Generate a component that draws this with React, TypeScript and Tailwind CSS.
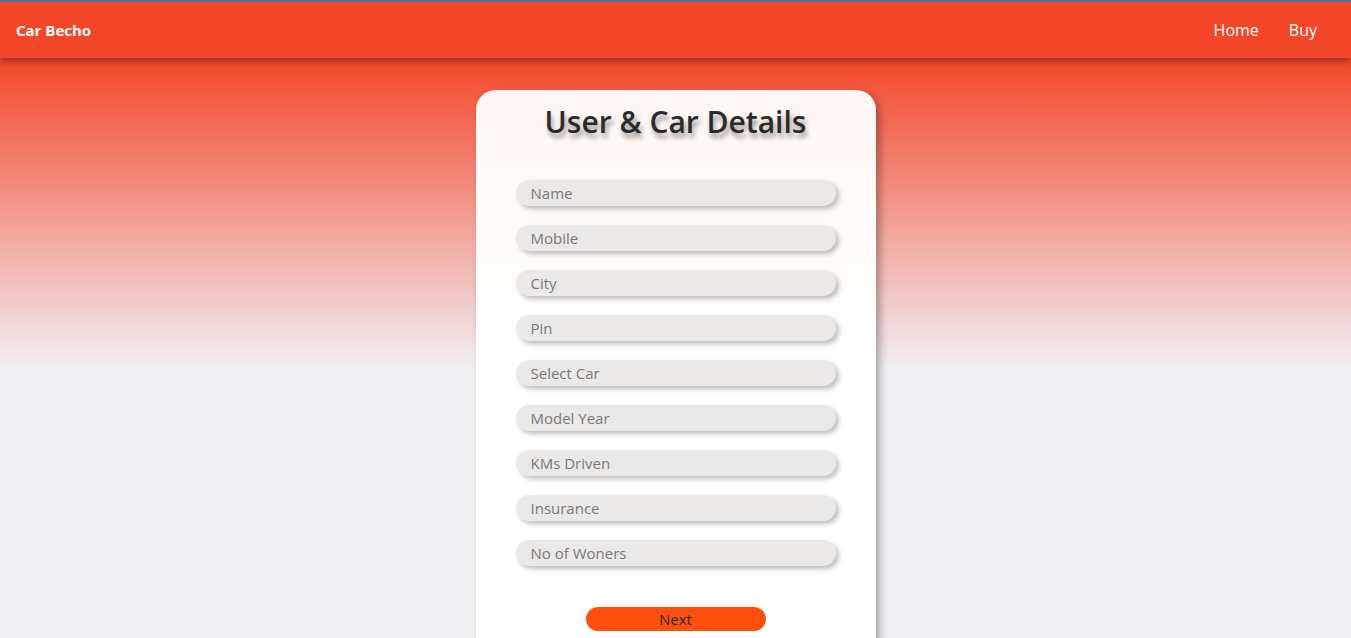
import React from "react";

const FIELDS = [
  "Name",
  "Mobile",
  "City",
  "Pin",
  "Select Car",
  "Model Year",
  "KMs Driven",
  "Insurance",
  "No of Woners",
];

function Navbar() {
  return (
    <nav className="relative z-10 flex h-[56px] shrink-0 items-center justify-between bg-[#f4472a] pl-4 pr-[34px] shadow-[0_4px_6px_rgba(0,0,0,0.3)]">
      <span className="text-[15px] font-bold text-white">Car Becho</span>
      <div className="flex items-center gap-[30px] text-[16px] text-white">
        <a href="#">Home</a>
        <a href="#">Buy</a>
      </div>
    </nav>
  );
}

export default function App() {
  return (
    <div className="flex h-[638px] flex-col overflow-hidden border-t-2 border-[#51709c] bg-[#f1f0f5] font-['Open_Sans',sans-serif]">
      <Navbar />
      <main className="flex shrink-0 justify-center bg-[linear-gradient(180deg,#f4472a_0px,#f1f0f5_312px)] pt-8">
        <form className="flex h-[600px] w-[400px] flex-col items-center rounded-[20px] bg-white/95 pt-[8px] shadow-[4px_4px_8px_rgba(0,0,0,0.3)]">
          <h1 className="text-[30px] font-semibold leading-[48px] text-[#2b2b2b] [text-shadow:2px_5px_5px_rgba(0,0,0,0.4)]">
            User &amp; Car Details
          </h1>
          <div className="mt-[34px] flex flex-col gap-[19px]">
            {FIELDS.map((f) => (
              <input
                key={f}
                type="text"
                placeholder={f}
                className="h-[26px] w-[320px] rounded-full bg-[#ebe8e8] pl-[15px] text-[15px] text-[#333] shadow-[3px_3px_5px_rgba(0,0,0,0.25)] outline-none placeholder:text-[#7a7a7a]"
              />
            ))}
          </div>
          <button
            type="button"
            className="mt-[41px] h-[24px] w-[180px] rounded-full bg-[#ff4f0f] text-[15px] leading-[24px] text-[#2b2b2b]"
          >
            Next
          </button>
        </form>
      </main>
    </div>
  );
}
